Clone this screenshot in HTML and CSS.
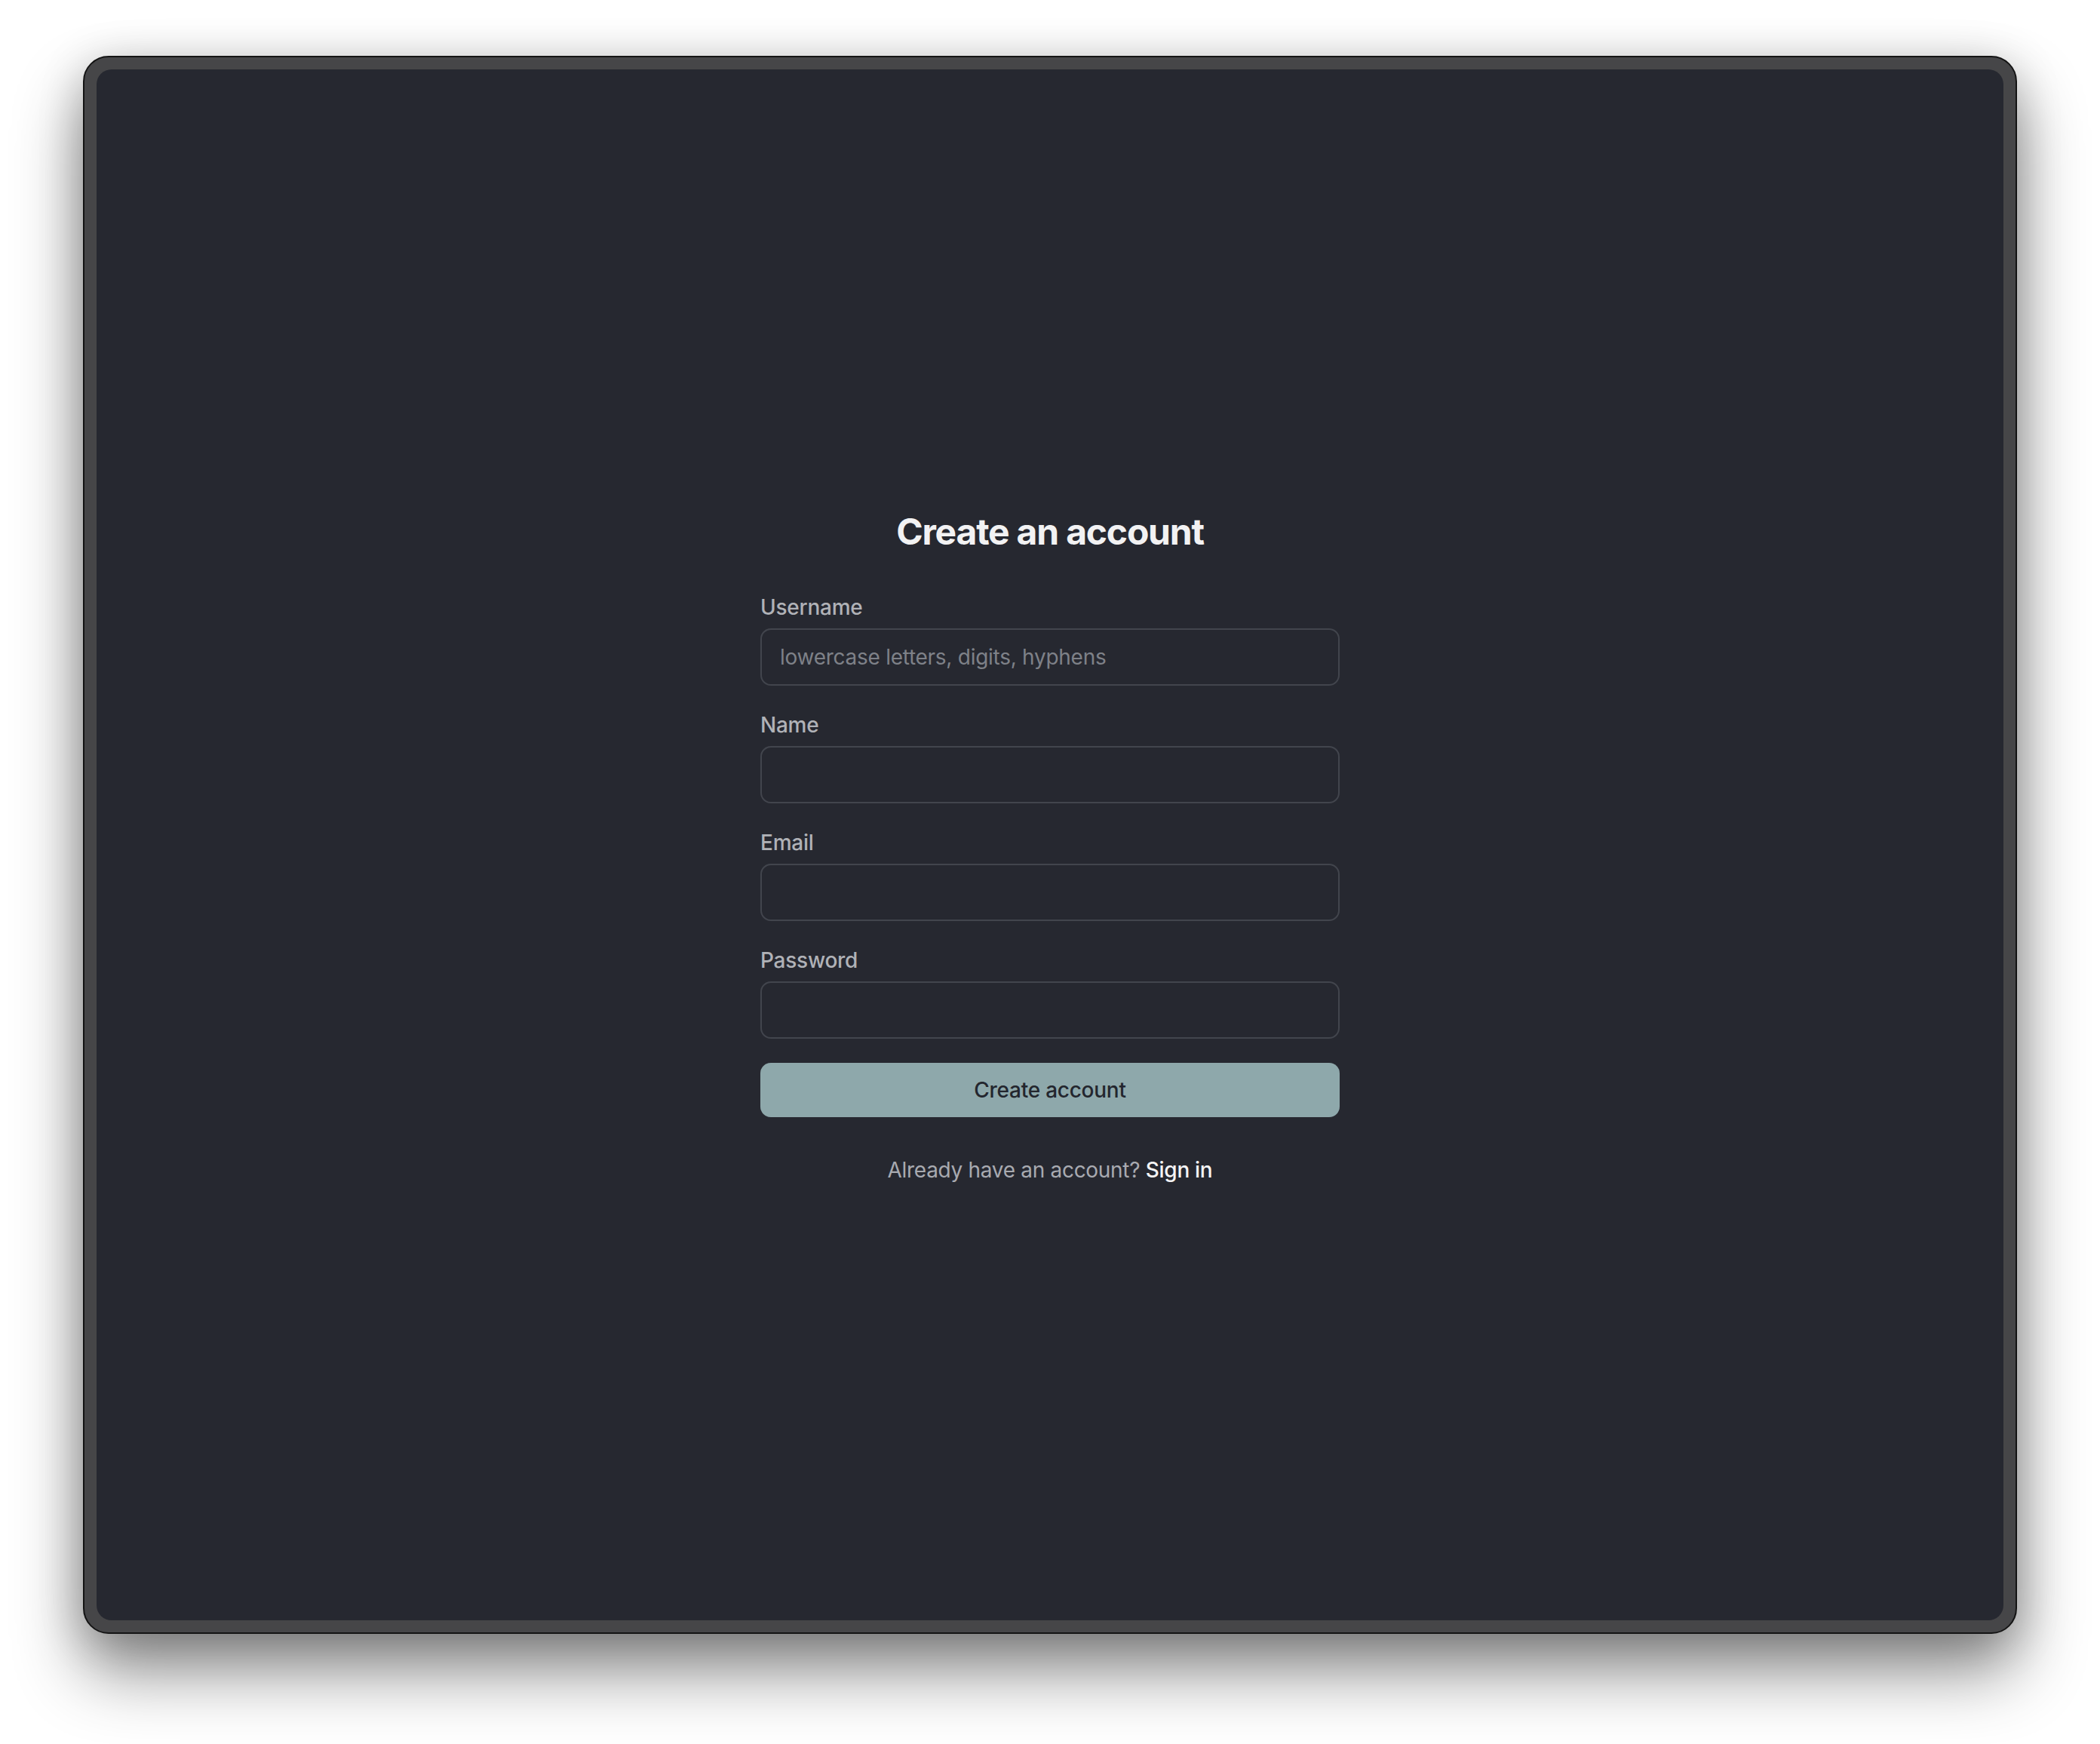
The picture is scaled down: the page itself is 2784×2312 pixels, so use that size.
FILE: index.html
```html
<!DOCTYPE html>
<html lang="en">
<head>
<meta charset="utf-8">
<title>Create an account</title>
<link rel="stylesheet" href="styles.css">
</head>
<body>
<div class="window">
  <main class="screen">
    <form class="form">
      <h1 class="title">Create an account</h1>
      <div class="field">
        <label class="label" for="username">Username</label>
        <input class="input" id="username" type="text" placeholder="lowercase letters, digits, hyphens">
      </div>
      <div class="field">
        <label class="label" for="name">Name</label>
        <input class="input" id="name" type="text">
      </div>
      <div class="field">
        <label class="label" for="email">Email</label>
        <input class="input" id="email" type="email">
      </div>
      <div class="field">
        <label class="label" for="password">Password</label>
        <input class="input" id="password" type="password">
      </div>
      <button class="button" type="button">Create account</button>
      <p class="footer">Already have an account? <a class="link" href="#">Sign in</a></p>
    </form>
  </main>
</div>
</body>
</html>
```
FILE: styles.css
```css
* { box-sizing: border-box; }
html, body { margin: 0; padding: 0; }
body {
  background: #ffffff;
  width: 2784px;
  height: 2312px;
  padding: 74px 110px 0;
  font-family: Inter, "Liberation Sans", sans-serif;
}
.window {
  width: 2564px;
  height: 2092px;
  border: 2px solid #141414;
  border-radius: 34px;
  background: #464648;
  padding: 16px;
  box-shadow: 0 50px 90px rgba(0, 0, 0, 0.45), 0 10px 60px rgba(0, 0, 0, 0.2);
}
.screen {
  width: 100%;
  height: 100%;
  background: #262830;
  border-radius: 20px;
  display: flex;
  align-items: center;
  justify-content: center;
}
.form {
  width: 768px;
  padding-top: 4px;
  display: flex;
  flex-direction: column;
}
.title {
  margin: 0 0 48px;
  font-size: 48px;
  line-height: 64px;
  font-weight: 700;
  color: #f2f2f3;
  text-align: center;
  letter-spacing: -1.2px;
}
.field {
  display: flex;
  flex-direction: column;
  gap: 8px;
  margin-bottom: 32px;
}
.label {
  font-size: 28px;
  line-height: 40px;
  font-weight: 500;
  color: #b0b2b7;
  letter-spacing: -0.25px;
}
.input {
  height: 76px;
  border: 2px solid #42454d;
  border-radius: 14px;
  background: #262830;
  padding: 0 24px;
  font-family: Inter, "Liberation Sans", sans-serif;
  font-size: 28px;
  letter-spacing: -0.27px;
  color: #e6e6e8;
  outline: none;
}
.input::placeholder { color: #7e8188; }
.button {
  height: 72px;
  border: none;
  border-radius: 14px;
  background: #8ea8ab;
  color: #23262e;
  font-family: Inter, "Liberation Sans", sans-serif;
  font-size: 28px;
  font-weight: 500;
  letter-spacing: -0.25px;
}
.footer {
  margin: 50px 0 0;
  font-size: 28px;
  line-height: 40px;
  text-align: center;
  color: #a8aab0;
  letter-spacing: -0.3px;
}
.link {
  color: #f4f4f5;
  font-weight: 500;
  text-decoration: none;
}
```
